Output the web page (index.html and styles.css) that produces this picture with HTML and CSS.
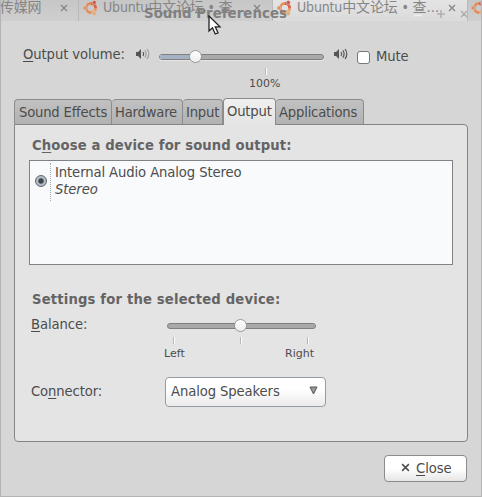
FILE: index.html
```
<!DOCTYPE html>
<html lang="en">
<head>
  <meta charset="UTF-8">
  <title>Sound Preferences</title>
  <link rel="stylesheet" href="styles.css">
</head>
<body>
  <!-- Shared icons -->
  <svg class="sprite" width="0" height="0">
    <symbol id="ubuntu" viewBox="0 0 16 16">
      <circle cx="8" cy="8" r="4.6" fill="none" stroke="#e88a55" stroke-width="2.6"/>
      <path d="M8 3.4A4.6 4.6 0 0 1 12.6 8" fill="none" stroke="#dc604c" stroke-width="2.6"/>
      <path d="M12.3 9.6A4.6 4.6 0 0 1 8 12.6" fill="none" stroke="#e6aa6b" stroke-width="2.6"/>
      <circle cx="2" cy="8" r="2" fill="#e88a55" stroke="#d2d2d2" stroke-width=".6"/>
      <circle cx="11.3" cy="2.5" r="2" fill="#d75143" stroke="#d2d2d2" stroke-width=".6"/>
      <circle cx="11.3" cy="13.5" r="2" fill="#e6aa6b" stroke="#d2d2d2" stroke-width=".6"/>
    </symbol>
    <symbol id="cross" viewBox="0 0 8 8">
      <path d="M1 1L7 7M7 1L1 7" fill="none" stroke="currentColor" stroke-width="1.3"/>
    </symbol>
    <symbol id="speaker" viewBox="0 0 16 14">
      <path d="M1 5H3L6 2V12L3 9H1Z" fill="#555"/>
      <path d="M8 5Q9.4 7 8 9" fill="none" stroke="#555" stroke-width="1.2"/>
      <path d="M9.8 3.4Q12.4 7 9.8 10.6" fill="none" stroke="currentColor" stroke-width="1.2"/>
      <path d="M12 2Q15.6 7 12 12" fill="none" stroke="currentColor" stroke-width="1.2"/>
    </symbol>
  </svg>

  <div class="window">
    <!-- Browser tabs showing through the titlebar -->
    <div class="browser-tabs">
      <div class="browser-tab first"><span>度传媒网</span><svg class="x"><use href="#cross"/></svg></div>
      <div class="browser-tab second"><svg class="logo"><use href="#ubuntu"/></svg><span>Ubuntu中文论坛 • 查…</span><svg class="x"><use href="#cross"/></svg></div>
      <div class="browser-tab third"><svg class="logo"><use href="#ubuntu"/></svg><span>Ubuntu中文论坛 • 查…</span><svg class="x"><use href="#cross"/></svg></div>
      <div class="browser-tab fourth"><svg class="logo"><use href="#ubuntu"/></svg></div>
    </div>
    <div class="titlebar">
      <span class="title">Sound Preferences</span>
      <svg class="title-buttons" width="56" height="12" viewBox="0 0 56 12">
        <path d="M1 7.5H9" stroke="#f0f0f0" stroke-width="1.6"/>
        <path d="M28 2V10M24 6H32M48 3L54 9M54 3L48 9" fill="none" stroke="#b0b0b0" stroke-width="1.5"/>
      </svg>
    </div>
    <svg class="cursor" width="14" height="21" viewBox="0 0 14 21"><path d="M1 1V16L4.5 12.8L7.2 19L10 17.8L7.3 11.8H12Z" fill="#fff" stroke="#222" stroke-width="1.3"/></svg>

    <!-- Volume -->
    <div class="volume-row">
      <label class="volume-label"><u>O</u>utput volume:</label>
      <svg class="speaker low"><use href="#speaker"/></svg>
      <div class="volume-scale">
        <div class="track"><div class="fill"></div><div class="thumb"></div></div>
        <div class="tick"></div>
        <span class="mark">100%</span>
      </div>
      <svg class="speaker high"><use href="#speaker"/></svg>
      <div class="checkbox"></div>
      <label class="mute">Mute</label>
    </div>

    <!-- Tabs -->
    <div class="tabs">
      <div class="tab effects"><span>Sound Effects</span></div>
      <div class="tab hardware"><span>Hardware</span></div>
      <div class="tab input"><span>Input</span></div>
      <div class="tab output active"><span>Output</span></div>
      <div class="tab applications"><span>Applications</span></div>
    </div>

    <div class="panel">
      <h3>C<u>h</u>oose a device for sound output:</h3>
      <div class="device-list">
        <div class="radio"></div>
        <div class="device"><span class="device-name">Internal Audio Analog Stereo</span><br><i>Stereo</i></div>
      </div>
      <h3 class="settings-title">Settings for the selected device:</h3>
      <div class="balance-row">
        <label><u>B</u>alance:</label>
        <div class="balance-scale">
          <div class="track"><div class="thumb"></div></div>
          <div class="ticks"><div class="tick"></div><div class="tick"></div><div class="tick"></div></div>
          <div class="marks"><span class="mark">Left</span><span class="mark">Right</span></div>
        </div>
      </div>
      <div class="connector-row">
        <label>Co<u>n</u>nector:</label>
        <div class="combo">
          <span>Analog Speakers</span>
          <svg width="9" height="9" viewBox="0 0 9 9"><path d="M1 1H8L4.5 8Z" fill="#999" stroke="#555"/></svg>
        </div>
      </div>
    </div>

    <div class="footer">
      <div class="close-button"><svg class="x"><use href="#cross"/></svg><span><u>C</u>lose</span></div>
    </div>
  </div>
</body>
</html>
```

FILE: styles.css
```
* {
  box-sizing: border-box;
}

body {
  margin: 0;
  font-family: "DejaVu Sans Condensed", "DejaVu Sans", "Noto Sans CJK SC", sans-serif;
  font-stretch: condensed;
  font-size: 14.67px;
  letter-spacing: -0.1px;
  line-height: 17px;
  color: #4c4c4c;
  white-space: nowrap;
  overflow: hidden;
}

svg {
  display: block;
  flex: none;
}

u {
  text-underline-offset: 2px;
  text-decoration-thickness: 1px;
  text-decoration-skip-ink: none;
}

.sprite {
  position: absolute;
}

.window {
  position: relative;
  width: 482px;
  height: 497px;
  background: #d6d6d6;
  border: 1px solid #b4b4b4;
  border-top: none;
  overflow: hidden;
}

/* Browser tabs */
.browser-tabs {
  display: flex;
  height: 21px;
  margin-left: -1px;
  width: 482px;
}

.browser-tab {
  display: flex;
  flex: none;
  height: 21px;
  background: linear-gradient(#c6c6c6, #cfcfcf);
  border-right: 1px solid #b9b9b9;
  color: #858585;
  font-size: 14px;
  letter-spacing: -0.15px;
  line-height: 15px;
  overflow: hidden;
}

.browser-tab .x {
  width: 8px;
  height: 8px;
  margin-top: 4px;
  margin-left: auto;
}

.logo {
  width: 16px;
  height: 16px;
  margin: 0 4px 0 4px;
}

.first {
  width: 79px;
  padding-right: 10px;
}

.first span {
  margin-left: -14px;
}

.second {
  width: 194px;
  padding-right: 11px;
}

.third {
  width: 195px;
  padding-right: 11px;
  background: linear-gradient(#e4e4e4, #dadada);
}

.fourth {
  width: 14px;
  border: none;
}

.fourth .logo {
  margin-left: 3px;
}

/* Titlebar over the tabs */
.titlebar {
  position: absolute;
  left: 0;
  top: 5px;
  width: 100%;
  height: 17px;
}

.title {
  position: absolute;
  left: 143px;
  font: bold 13.33px/17px "DejaVu Sans", sans-serif;
  letter-spacing: 0.05px;
  color: #808080;
}

.title-buttons {
  position: absolute;
  left: 412px;
  top: 3px;
}

.cursor {
  position: absolute;
  left: 207px;
  top: 15px;
}

/* Volume */
.volume-row {
  display: flex;
  height: 77px;
  padding: 24px 0 0 22px;
}

.volume-label {
  width: 112px;
  letter-spacing: -0.1px;
}

.speaker {
  width: 16px;
  height: 14px;
  margin-top: 2px;
  color: #555;
}

.low {
  color: #a2a2a2;
}

.volume-scale {
  width: 165px;
  margin: 9px 9px 0 8px;
}

.track {
  position: relative;
  height: 6px;
  background: #a9a9a9;
  border: 1px solid #808080;
  border-radius: 3px;
  box-shadow: 0 1px #e6e6e6;
}

.fill {
  width: 36px;
  height: 4px;
  background: #a4b2c4;
}

.thumb {
  position: absolute;
  left: 29px;
  top: -5px;
  width: 13px;
  height: 13px;
  border: 1px solid #999;
  border-radius: 50%;
  background: linear-gradient(#fff, #eee);
}

.tick {
  width: 2px;
  height: 7px;
  background: linear-gradient(90deg, #b5b5b5 50%, #fff 50%);
}

.volume-scale .tick {
  margin: 8px 0 0 106px;
}

.mark {
  font-size: 11px;
  letter-spacing: 0;
  line-height: 14px;
  font-family: "DejaVu Sans", sans-serif;
  font-stretch: normal;
}

.volume-scale .mark {
  display: block;
  margin: 2px 0 0 90px;
}

.checkbox {
  width: 13px;
  height: 13px;
  margin: 6px 6px 0 8px;
  border: 1px solid #777;
  border-radius: 3px;
  background: #fff;
}

.mute {
  margin-top: 2px;
}

/* Tabs */
.tabs {
  display: flex;
  align-items: flex-end;
  height: 26px;
  margin-left: 13px;
  position: relative;
}

.tab {
  height: 25px;
  padding: 3px 0 0 4px;
  border: 1px solid #8c8c8c;
  border-left-width: 0;
  border-bottom: none;
  border-radius: 4px 4px 0 0;
  background: linear-gradient(#c1c1c1, #b2b2b2);
  letter-spacing: -0.2px;
}

.effects {
  width: 98px;
  border-left-width: 1px;
}

.hardware {
  width: 71px;
  padding-left: 3px;
}

.input {
  width: 40px;
  padding-left: 3px;
}

.output {
  width: 53px;
  padding-left: 3px;
}

.applications {
  width: 88px;
  padding-left: 3px;
}

.tab.active {
  height: 27px;
  margin-bottom: -1px;
  border-left-width: 1px;
  background: linear-gradient(#f0f0f0, #e4e4e4);
  z-index: 1;
}

.panel {
  width: 454px;
  height: 318px;
  margin-left: 13px;
  padding: 11px 14px 0;
  border: 1px solid #858585;
  border-radius: 0 4px 4px 4px;
  background: #e4e4e4;
}

h3 {
  margin: 0 0 0 3px;
  font-size: 14.67px;
  letter-spacing: 0.12px;
  line-height: 17px;
  color: #646464;
}

.device-list {
  display: flex;
  height: 105px;
  margin-top: 7px;
  border: 1px solid #808285;
  background: #f8fafc;
}

.radio {
  width: 12px;
  height: 12px;
  margin: 14px 3px 0 5px;
  border: 1px solid #666;
  border-radius: 50%;
  background: radial-gradient(circle, #444 0 2.2px, #aebccb 3.2px);
}

.device {
  height: 38px;
  margin-top: 2px;
  padding-left: 4px;
  border-left: 1px dotted #aaa;
}

.settings-title {
  margin-top: 25px;
  letter-spacing: 0.17px;
}

.balance-row {
  display: flex;
  height: 70px;
  padding: 8px 0 0 2px;
}

.balance-row label,
.connector-row label {
  width: 134px;
}

.connector-row label {
  padding-bottom: 3px;
}

.balance-scale {
  width: 150px;
  padding-top: 8px;
  margin-left: 1px;
}

.balance-scale .track {
  margin-left: 1px;
}

.balance-scale .thumb {
  left: 66px;
}

.ticks {
  display: flex;
  justify-content: space-between;
  padding: 8px 7px 0 7px;
}

.marks {
  display: flex;
  justify-content: space-between;
  margin: 3px 2px 0 -2px;
}

.connector-row {
  display: flex;
  align-items: center;
  padding-left: 2px;
}

.combo {
  display: flex;
  align-items: center;
  justify-content: space-between;
  width: 161px;
  height: 30px;
  padding: 0 7px 3px 5px;
  border: 1px solid #969ca6;
  border-radius: 4px;
  background: linear-gradient(#fff 40%, #eaeaea);
}

.footer {
  display: flex;
  justify-content: flex-end;
  padding: 13px 14px 0;
}

.close-button {
  display: flex;
  align-items: center;
  gap: 6px;
  width: 83px;
  height: 27px;
  padding: 0 0 2px 16px;
  border: 1px solid #8c8c8c;
  border-radius: 4px;
  background: linear-gradient(#fff 50%, #e6e6e6);
}

.close-button .x {
  width: 9px;
  height: 9px;
}
```
